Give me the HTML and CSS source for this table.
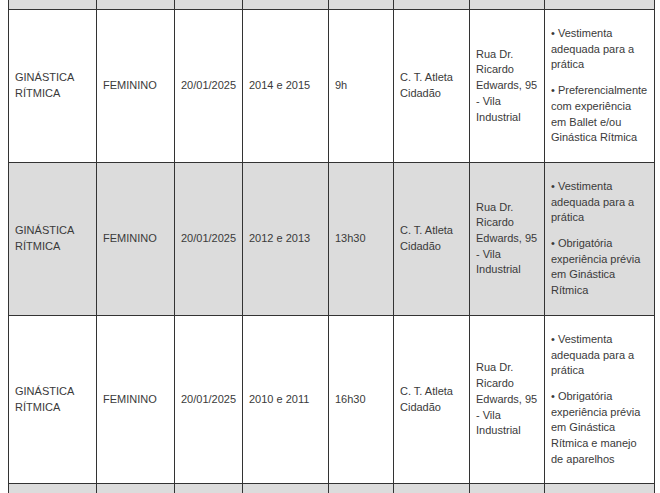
FILE: index.html
```html
<!DOCTYPE html>
<html lang="pt-BR">
<head>
<meta charset="utf-8">
<title>Ginástica Rítmica - Seletivas</title>
<link rel="stylesheet" href="styles.css">
</head>
<body>
<table class="schedule">
  <colgroup>
    <col class="c-mod"><col class="c-naipe"><col class="c-data"><col class="c-ano">
    <col class="c-hora"><col class="c-local"><col class="c-end"><col class="c-req">
  </colgroup>
  <thead>
    <tr class="head"><th></th><th></th><th></th><th></th><th></th><th></th><th></th><th></th></tr>
  </thead>
  <tbody>
    <tr>
      <td>GINÁSTICA RÍTMICA</td>
      <td>FEMININO</td>
      <td>20/01/2025</td>
      <td>2014 e 2015</td>
      <td>9h</td>
      <td>C. T. Atleta Cidadão</td>
      <td>Rua Dr. Ricardo Edwards, 95 - Vila Industrial</td>
      <td class="req"><p>• Vestimenta adequada para a prática</p><p>• Preferencialmente com experiência em Ballet e/ou Ginástica Rítmica</p></td>
    </tr>
    <tr class="alt">
      <td>GINÁSTICA RÍTMICA</td>
      <td>FEMININO</td>
      <td>20/01/2025</td>
      <td>2012 e 2013</td>
      <td>13h30</td>
      <td>C. T. Atleta Cidadão</td>
      <td>Rua Dr. Ricardo Edwards, 95 - Vila Industrial</td>
      <td class="req"><p>• Vestimenta adequada para a prática</p><p>• Obrigatória experiência prévia em Ginástica Rítmica</p></td>
    </tr>
    <tr>
      <td>GINÁSTICA RÍTMICA</td>
      <td>FEMININO</td>
      <td>20/01/2025</td>
      <td>2010 e 2011</td>
      <td>16h30</td>
      <td>C. T. Atleta Cidadão</td>
      <td>Rua Dr. Ricardo Edwards, 95 - Vila Industrial</td>
      <td class="req"><p>• Vestimenta adequada para a prática</p><p>• Obrigatória experiência prévia em Ginástica Rítmica e manejo de aparelhos</p></td>
    </tr>
    <tr class="alt">
      <td></td>
      <td></td>
      <td></td>
      <td></td>
      <td></td>
      <td></td>
      <td>Rua Dr. Rubião Júnior, 84 - Centro</td>
      <td></td>
    </tr>
  </tbody>
</table>
</body>
</html>
```
FILE: styles.css
```css
html, body {
  margin: 0;
  padding: 0;
  background: #ffffff;
}
body {
  padding: 0 0 0 8px;
  font-family: "Liberation Sans", Arial, sans-serif;
  font-size: 11px;
  line-height: 15.7px;
  color: #3a3a3a;
}
.schedule {
  border-collapse: collapse;
  table-layout: fixed;
  width: 646px;
}
.c-mod { width: 88px; }
.c-naipe { width: 78px; }
.c-data { width: 68px; }
.c-ano { width: 86px; }
.c-hora { width: 65px; }
.c-local { width: 76px; }
.c-end { width: 75px; }
.c-req { width: 110px; }

.schedule th,
.schedule td {
  border: 1px solid #333333;
  text-align: left;
  vertical-align: middle;
  font-weight: normal;
}
.schedule th {
  border-top: none;
  height: 9px;
  padding: 0;
  background: #dcdcdc;
}
.schedule td {
  padding: 6px 6px 6px 6px;
}
.schedule tr.alt td {
  background: #dcdcdc;
}
.req p {
  margin: 10px 0;
}
```
